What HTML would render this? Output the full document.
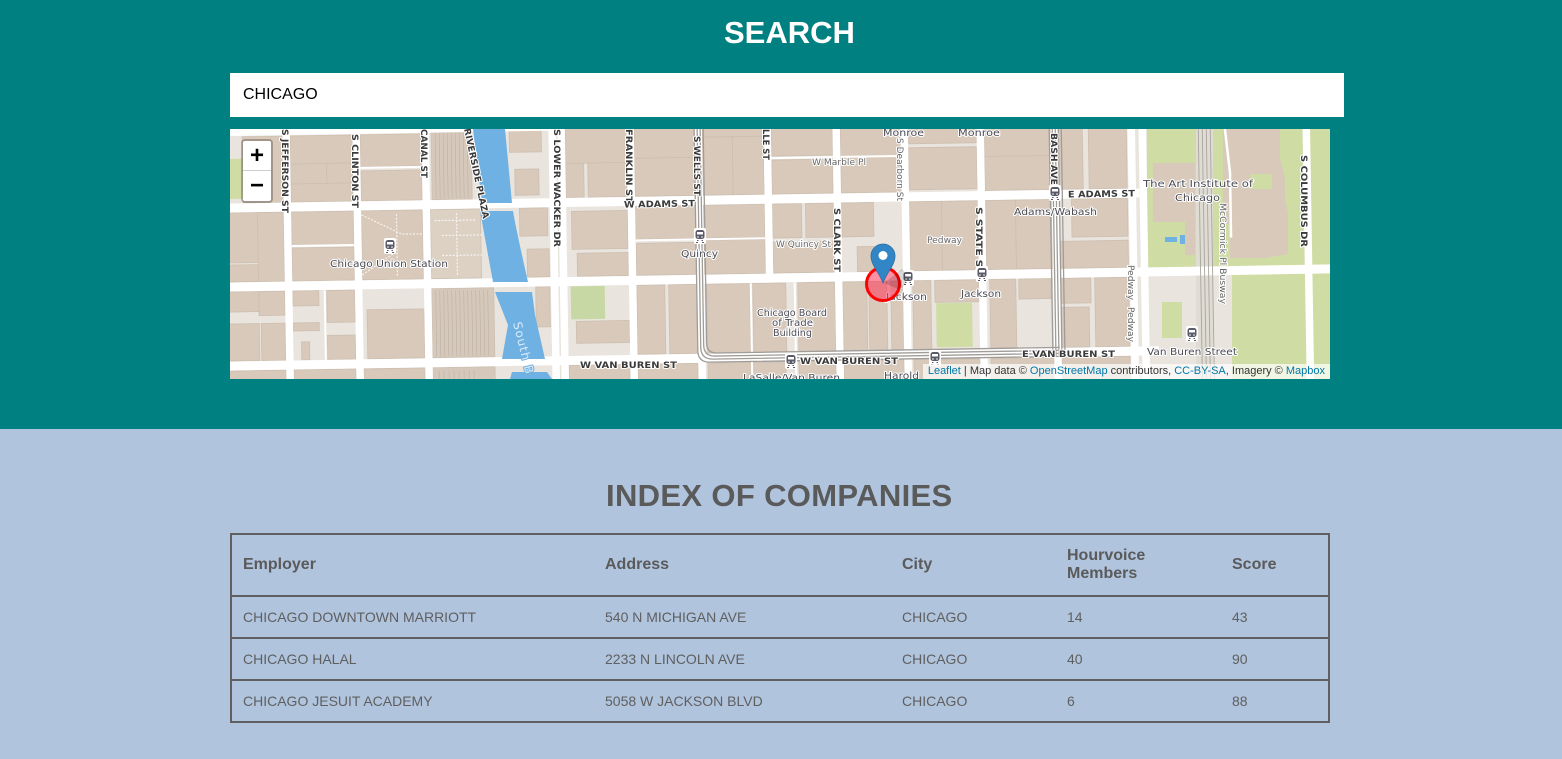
<!DOCTYPE html>
<html><head><meta charset="utf-8"><style>
html,body{margin:0;padding:0;width:1562px;height:759px;overflow:hidden;background:#b0c4de;font-family:"Liberation Sans",Arial,sans-serif}
.a{position:absolute}
#top{left:0;top:0;width:1562px;height:429px;background:#008080}
h1,h2{margin:0;position:absolute;font-weight:bold;white-space:nowrap}
#s{left:724px;top:15px;font-size:31px;line-height:36px;color:#fff}
#i{left:230px;top:73px;width:1114px;height:44px;background:#fff;color:#000;font-size:16px;line-height:44px;text-indent:13px}
#m{left:230px;top:129px;width:1100px;height:250px;overflow:hidden;background:#e9e4dd}
#z{left:11px;top:10px;width:28px;height:60px;border:2px solid rgba(0,0,0,.25);border-radius:4px;background:#fff;background-clip:padding-box}
#z div{position:absolute;left:0;width:28px;height:30px;text-align:center;color:#000;font:bold 24px/30px "Liberation Sans",sans-serif}
#at{right:0;bottom:0;height:15px;padding:0 5px;background:rgba(255,255,255,.7);font-size:11px;line-height:15px;color:#333;white-space:nowrap}
#at span{color:#0078a8}
#h{left:606px;top:478px;font-size:31px;line-height:36px;color:#5a5a5a;letter-spacing:.34px}
#t{left:230px;top:533px;width:1100px;height:190px;box-sizing:border-box;border:2px solid #5f5f5f}
.l{position:absolute;left:-2px;width:1100px;height:2px;background:#5f5f5f}
.c{position:absolute;color:#5f5f5f;font-size:14px;line-height:16px;white-space:nowrap}
.b{font-size:16px;font-weight:bold;line-height:18px;color:#5a5a5a}
svg text{font-family:"DejaVu Sans","Liberation Sans",sans-serif;paint-order:stroke;stroke:#fff;stroke-width:2px;stroke-linejoin:round}
.r{font-weight:bold;font-size:9px;fill:#3a3a3a}
.n{font-size:10px;fill:#4a4a55}
.sm{font-size:8.5px;fill:#666}
</style></head><body>
<div class="a" id="top"></div>
<h1 id="s">SEARCH</h1>
<div class="a" id="i">CHICAGO</div>
<div class="a" id="m">
<svg width="1100" height="250" viewBox="0 0 1100 250" style="position:absolute;left:0;top:0">
<defs>
<g id="st"><rect x="-6" y="-8" width="12" height="16" rx="2" fill="#fff"/><rect x="-4.5" y="-6" width="9" height="9" rx="2.5" fill="#5a5a68"/><rect x="-3" y="-4" width="6" height="2.5" fill="#fff"/><circle cx="-2" cy="1" r=".8" fill="#fff"/><circle cx="2" cy="1" r=".8" fill="#fff"/><path d="M-3 4.500h1.500M1.500 4.500H3M-4 6.500h2M2 6.500h2" stroke="#5a5a68" fill="none"/></g>
</defs>
<rect width="1100" height="250" fill="#e9e4dd"/>
<!-- park east of Michigan -->
<path d="M917 0H1100V250H1002V140H917Z" fill="#cfdca4"/>
<rect x="917" y="140" width="85" height="110" fill="#e9e4dd"/>
<rect x="932" y="173" width="20" height="36" fill="#cfdca4"/>
<rect x="1003" y="146" width="70" height="104" fill="#cfdca4"/>
<path d="M923 34H965V126H955V93H923Z" fill="#d8c9ba"/>
<path d="M993 0H1050V30L1055 50V70L1058 85V125L1035 129H1000V95H993Z" fill="#d8c9ba"/>
<rect x="1020" y="45" width="22" height="15" fill="#cfdca4"/>
<rect x="966" y="0" width="17" height="250" fill="#dfdcd3"/>
<g transform="matrix(1,-0.0165,0.0165,1,0,0)">
<rect x="-10" y="30" width="22" height="40" fill="#cfdca4"/>
<g fill="#d8c9ba" stroke="#cdbfb1" stroke-width=".8">
<!-- row A -->
<rect x="12" y="8" width="40" height="66"/>
<rect x="60" y="8" width="62" height="28"/><rect x="60" y="36" width="36" height="20"/><rect x="96" y="36" width="26" height="20"/><rect x="60" y="56" width="62" height="18"/>
<rect x="130" y="8" width="61" height="32"/><rect x="130" y="44" width="61" height="30"/>
<rect x="201" y="-20" width="40" height="94" fill="#d6c9bb"/>
<rect x="279" y="-10" width="32" height="38"/><rect x="284" y="45" width="24" height="26"/>
<rect x="335" y="-20" width="61" height="60"/><rect x="335" y="40" width="18" height="34"/><rect x="357" y="40" width="39" height="34"/>
<rect x="404" y="-20" width="60" height="56"/><rect x="404" y="36" width="60" height="38"/>
<rect x="472" y="-20" width="61" height="36"/><rect x="472" y="16" width="30" height="58"/><rect x="502" y="16" width="31" height="58"/>
<rect x="541" y="-20" width="61" height="56"/><rect x="541" y="40" width="61" height="34"/>
<rect x="610" y="-20" width="60" height="58"/><rect x="610" y="38" width="60" height="36"/>
<rect x="678" y="-20" width="68" height="46"/><rect x="678" y="30" width="68" height="42"/>
<rect x="754" y="-20" width="66" height="60"/><rect x="754" y="40" width="66" height="34"/>
<rect x="828" y="-20" width="24" height="94"/><rect x="858" y="-20" width="38" height="94"/>
<!-- row B -->
<rect x="-10" y="84" width="62" height="50"/><rect x="-10" y="136" width="36" height="17"/><rect x="26" y="84" width="26" height="69"/>
<rect x="60" y="84" width="62" height="34"/><rect x="60" y="120" width="62" height="33"/>
<rect x="130" y="84" width="61" height="69"/>
<rect x="199" y="84" width="50" height="69" fill="#ddd1c4"/>
<rect x="288" y="84" width="28" height="28"/><rect x="295" y="125" width="22" height="28"/>
<rect x="340" y="88" width="56" height="38"/><rect x="345" y="130" width="51" height="23"/>
<rect x="404" y="84" width="60" height="33"/><rect x="404" y="121" width="60" height="32"/>
<rect x="472" y="84" width="61" height="33"/><rect x="472" y="119" width="61" height="34"/>
<rect x="541" y="84" width="29" height="34"/><rect x="574" y="84" width="28" height="34"/><rect x="541" y="122" width="61" height="31"/>
<rect x="610" y="84" width="32" height="34"/><rect x="625" y="128" width="20" height="25"/>
<rect x="678" y="84" width="32" height="69"/><rect x="710" y="84" width="36" height="69"/>
<rect x="754" y="84" width="30" height="69"/><rect x="784" y="84" width="36" height="69"/>
<rect x="840" y="84" width="56" height="38"/><rect x="828" y="126" width="68" height="27"/>
<!-- row C -->
<rect x="-10" y="163" width="36" height="20"/><rect x="-10" y="195" width="36" height="37"/><rect x="26" y="163" width="26" height="24"/><rect x="28" y="195" width="24" height="37"/>
<rect x="60" y="163" width="26" height="15"/><rect x="94" y="163" width="28" height="32"/><rect x="60" y="195" width="26" height="8"/><rect x="94" y="208" width="28" height="24"/><rect x="68" y="214" width="8" height="18"/>
<rect x="134" y="183" width="57" height="49"/>
<rect x="199" y="163" width="62" height="69" fill="#d6c9bb"/>
<rect x="303" y="163" width="14" height="40"/>
<rect x="343" y="198" width="53" height="22"/>
<rect x="404" y="163" width="28" height="69"/><rect x="436" y="163" width="28" height="69"/>
<rect x="474" y="163" width="43" height="69"/><rect x="520" y="163" width="33" height="69"/><rect x="565" y="163" width="37" height="69"/>
<rect x="610" y="163" width="24" height="69"/><rect x="636" y="163" width="18" height="69"/><rect x="658" y="163" width="14" height="69"/>
<rect x="680" y="163" width="18" height="69"/><rect x="702" y="163" width="44" height="22"/>
<rect x="757" y="163" width="26" height="69"/><rect x="786" y="163" width="32" height="20"/>
<rect x="828" y="163" width="30" height="25"/><rect x="828" y="192" width="28" height="40"/><rect x="862" y="163" width="34" height="69"/>
<!-- row D -->
<rect x="-10" y="242" width="62" height="40"/><rect x="60" y="242" width="62" height="40"/><rect x="130" y="242" width="61" height="40"/><rect x="199" y="242" width="62" height="40" fill="#d6c9bb"/><rect x="335" y="242" width="61" height="40"/><rect x="404" y="242" width="60" height="40"/><rect x="474" y="242" width="78" height="40"/><rect x="565" y="242" width="37" height="40"/><rect x="610" y="242" width="60" height="40"/><rect x="680" y="242" width="66" height="40"/><rect x="757" y="242" width="63" height="40"/><rect x="828" y="242" width="68" height="40"/>
</g>
<rect x="338" y="163" width="34" height="33" fill="#c8d8a4"/>
<rect x="703" y="186" width="36" height="44" fill="#cfdca4"/>
<!-- rail hatching -->
<g stroke="#bdb2a7" stroke-width=".6">
<path d="M205 -20V73M209 -20V73M213 -20V73M217 -20V73M221 -20V73M225 -20V73M229 -20V73M233 -20V73M237 -20V73"/>
<path d="M203 165V231M207 165V231M211 165V231M215 165V231M219 165V231M223 165V231M227 165V231M231 165V231M235 165V231M239 165V231M243 165V231M247 165V231M251 165V231M255 165V231"/>
<path d="M205 245V280M210 245V280M215 245V280M220 245V280M225 245V280M230 245V280M235 245V280M240 245V280"/>
</g>
<g stroke="#fff" fill="none" stroke-width="1.2" stroke-dasharray="2 1.500" opacity=".8">
<path d="M130 88L170 108H191M165 88V150M130 148L165 125M203 95H245M210 110H250M210 130H250M225 88V150"/>
</g>
<!-- roads -->
<g stroke="#fff" fill="none">
<path d="M-10 79H908M-10 158H1120M-10 237H925" stroke-width="9"/>
<path d="M-10 3H320" stroke-width="8"/>
<path d="M56 -20V280M126 -20V280M195 -20V280M322 -20V280M331 -20V280M400 -20V280M468 -20V280M606 -20V280M674 -20V280M750 -20V280M824 -20V280M901 -20V280M912 -20V280M1076 -20V280" stroke-width="7.500"/>
<path d="M537 -20V155" stroke-width="7.500"/>
<path d="M130 41H191M60 118H122M541 38H602M610 38H670M404 118H464M472 118H533" stroke-width="2"/>
<path d="M518 163V280M92 163V232M562 163V280" stroke-width="2"/>
<path d="M993 0L999 60V125" stroke-width="2.500"/>
</g>
<g stroke="#a09c98" stroke-width="1.300" fill="none">
<path d="M464 -20V229Q464 241 476 241H826M467 -20V226Q467 238 479 238H826M470 -20V224Q470 235 481 235H826M473 -20V222Q473 232 483 232H826"/>
<path d="M819 -20V241M822 -20V241M825 -20V241M828 -20V241M831 -20V241"/>
<path d="M826 232H920M826 235H920M826 238H920M826 241H920" stroke-width="0"/>
</g>
<path d="M968 -10V280M972 -10V280M976 -10V280M980 -10V280" stroke="#a9a59f" stroke-width=".9" fill="none"/>
</g>
<!-- river -->
<g fill="#6fb1e3">
<path d="M243 0H275L282 74H252Z"/>
<path d="M250 82H283Q286 100 298 153H263Z"/>
<path d="M265 163H302L305 186L315 230H272L278 196Z"/>
<path d="M282 243H317L322 250H280Z"/>
<path d="M935 108h12v5h-12zM950 106h5v9h-5z"/>
</g>
<!-- road labels -->
<g class="r">
<text class="r" transform="translate(52,0) rotate(90)" textLength="84" lengthAdjust="spacingAndGlyphs">S JEFFERSON ST</text>
<text class="r" transform="translate(122,5) rotate(90)" textLength="74" lengthAdjust="spacingAndGlyphs">S CLINTON ST</text>
<text class="r" transform="translate(191,0) rotate(90)" textLength="49" lengthAdjust="spacingAndGlyphs">CANAL ST</text>
<text class="r" transform="translate(234,0) rotate(78)" textLength="92" lengthAdjust="spacingAndGlyphs">RIVERSIDE PLAZA</text>
<text class="r" transform="translate(324,0) rotate(90)" textLength="118" lengthAdjust="spacingAndGlyphs">S LOWER WACKER DR</text>
<text class="r" transform="translate(396,0) rotate(90)" textLength="74" lengthAdjust="spacingAndGlyphs">FRANKLIN ST</text>
<text class="r" transform="translate(464,7) rotate(90)" textLength="60" lengthAdjust="spacingAndGlyphs">S WELLS ST</text>
<text class="r" transform="translate(533,0) rotate(90)" textLength="31" lengthAdjust="spacingAndGlyphs">LLE ST</text>
<text class="r" transform="translate(604,79) rotate(90)" textLength="64" lengthAdjust="spacingAndGlyphs">S CLARK ST</text>
<text class="r" transform="translate(746,78) rotate(90)" textLength="68" lengthAdjust="spacingAndGlyphs">S STATE ST</text>
<text class="r" transform="translate(821,4) rotate(90)" textLength="52" lengthAdjust="spacingAndGlyphs">BASH AVE</text>
<text class="r" transform="translate(1071,26) rotate(90)" textLength="92" lengthAdjust="spacingAndGlyphs">S COLUMBUS DR</text>
<text class="r" x="394" y="78" textLength="71" lengthAdjust="spacingAndGlyphs" transform="rotate(-1 430 75)">W ADAMS ST</text>
<text class="r" x="838" y="68" textLength="67" lengthAdjust="spacingAndGlyphs" transform="rotate(-1 870 65)">E ADAMS ST</text>
<text class="r" x="350" y="239" textLength="97" lengthAdjust="spacingAndGlyphs">W VAN BUREN ST</text>
<text class="r" x="570" y="235" textLength="98" lengthAdjust="spacingAndGlyphs">W VAN BUREN ST</text>
<text class="r" x="792" y="228" textLength="93" lengthAdjust="spacingAndGlyphs">E VAN BUREN ST</text>
</g>
<g>
<text class="n" x="100" y="138" textLength="118" lengthAdjust="spacingAndGlyphs">Chicago Union Station</text>
<text class="n" x="451" y="128" textLength="37" lengthAdjust="spacingAndGlyphs">Quincy</text>
<text class="n" x="527" y="187" textLength="70" lengthAdjust="spacingAndGlyphs" style="font-size:9.500px">Chicago Board</text>
<text class="n" x="542" y="197" textLength="41" lengthAdjust="spacingAndGlyphs" style="font-size:9.500px">of Trade</text>
<text class="n" x="543" y="207" textLength="39" lengthAdjust="spacingAndGlyphs" style="font-size:9.500px">Building</text>
<text class="n" x="656" y="171" textLength="41" lengthAdjust="spacingAndGlyphs">Jackson</text>
<text class="n" x="731" y="168" textLength="40" lengthAdjust="spacingAndGlyphs">Jackson</text>
<text class="n" x="784" y="86" textLength="83" lengthAdjust="spacingAndGlyphs">Adams/Wabash</text>
<text class="n" x="913" y="58" textLength="110" lengthAdjust="spacingAndGlyphs">The Art Institute of</text>
<text class="n" x="945" y="72" textLength="45" lengthAdjust="spacingAndGlyphs">Chicago</text>
<text class="n" x="917" y="226" textLength="90" lengthAdjust="spacingAndGlyphs">Van Buren Street</text>
<text class="n" x="653" y="7" textLength="41" lengthAdjust="spacingAndGlyphs">Monroe</text>
<text class="n" x="728" y="7" textLength="42" lengthAdjust="spacingAndGlyphs">Monroe</text>
<text class="n" x="654" y="250" textLength="35" lengthAdjust="spacingAndGlyphs">Harold</text>
<text class="n" x="513" y="252" textLength="97" lengthAdjust="spacingAndGlyphs">LaSalle/Van Buren</text>
<text class="sm" x="697" y="114" textLength="35" lengthAdjust="spacingAndGlyphs">Pedway</text>
<text class="sm" x="582" y="36" textLength="54" lengthAdjust="spacingAndGlyphs">W Marble Pl</text>
<text class="sm" x="546" y="118" textLength="55" lengthAdjust="spacingAndGlyphs">W Quincy St</text>
<text class="sm" transform="translate(667,9) rotate(90)" textLength="63" lengthAdjust="spacingAndGlyphs">S Dearborn St</text>
<text class="sm" transform="translate(990,74) rotate(90)" textLength="101" lengthAdjust="spacingAndGlyphs">McCormick Pl Busway</text>
<text class="sm" transform="translate(898,136) rotate(90)" textLength="35" lengthAdjust="spacingAndGlyphs">Pedway</text>
<text class="sm" transform="translate(898,178) rotate(90)" textLength="35" lengthAdjust="spacingAndGlyphs">Pedway</text>
<text transform="translate(283,194) rotate(76)" style="font-size:12px;letter-spacing:1px;fill:#dbeaf7;stroke:#6fb1e3">South B</text>
</g>
<use href="#st" x="160" y="117"/><use href="#st" x="470" y="107"/><use href="#st" x="678" y="149"/><use href="#st" x="752" y="145"/><use href="#st" x="825" y="64"/><use href="#st" x="962" y="205"/><use href="#st" x="561" y="232"/><use href="#st" x="705" y="229"/>
<!-- marker -->
<circle cx="653" cy="155" r="16.500" fill="#ff3355" fill-opacity=".55" stroke="#f00" stroke-width="3"/>
<path d="M654 154L672 140C680 148 676 158 668 160Z" fill="#000" opacity=".15"/>
<path d="M653 154C649 143 641 136 641 127A12 12 0 0 1 665 127C665 136 657 143 653 154Z" fill="#3386c6" stroke="#2a6ea5" stroke-width=".8"/>
<circle cx="653" cy="126.500" r="4.500" fill="#fff"/>
</svg>
<div class="a" id="z"><div style="top:0;border-bottom:1px solid #ccc;height:29px;line-height:29px">+</div><div style="top:30px">−</div></div>
<div class="a" id="at"><span>Leaflet</span> | Map data © <span>OpenStreetMap</span> contributors, <span>CC-BY-SA</span>, Imagery © <span>Mapbox</span></div>
</div>
<h2 class="a" id="h">INDEX OF COMPANIES</h2>
<div class="a" id="t">
<div class="l" style="top:60px"></div><div class="l" style="top:102px"></div><div class="l" style="top:144px"></div>
<div class="c b" style="left:11px;top:21px">Employer</div><div class="c b" style="left:373px;top:21px">Address</div><div class="c b" style="left:670px;top:21px">City</div><div class="c b" style="left:835px;top:12px">Hourvoice<br>Members</div><div class="c b" style="left:1000px;top:21px">Score</div>
<div class="c" style="left:11px;top:74px">CHICAGO DOWNTOWN MARRIOTT</div><div class="c" style="left:373px;top:74px">540 N MICHIGAN AVE</div><div class="c" style="left:670px;top:74px">CHICAGO</div><div class="c" style="left:835px;top:74px">14</div><div class="c" style="left:1000px;top:74px">43</div>
<div class="c" style="left:11px;top:116px">CHICAGO HALAL</div><div class="c" style="left:373px;top:116px">2233 N LINCOLN AVE</div><div class="c" style="left:670px;top:116px">CHICAGO</div><div class="c" style="left:835px;top:116px">40</div><div class="c" style="left:1000px;top:116px">90</div>
<div class="c" style="left:11px;top:158px">CHICAGO JESUIT ACADEMY</div><div class="c" style="left:373px;top:158px">5058 W JACKSON BLVD</div><div class="c" style="left:670px;top:158px">CHICAGO</div><div class="c" style="left:835px;top:158px">6</div><div class="c" style="left:1000px;top:158px">88</div>
</div>
</body></html>
